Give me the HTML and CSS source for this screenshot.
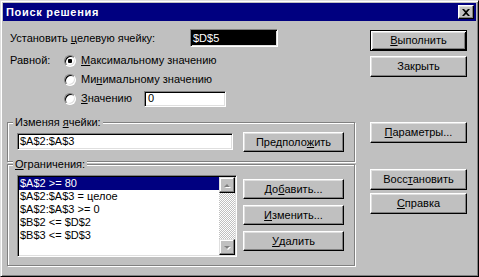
FILE: index.html
```html
<!DOCTYPE html>
<html>
<head>
	<meta charset="utf-8">
	<title>Поиск решения</title>
	<link rel="stylesheet" href="styles.css">
</head>
<body>
<div class="window">
	<div class="titlebar">
		<span class="title">Поиск решения</span>
		<span class="close">
			<svg width="8" height="7" viewBox="0 0 8 7"><path d="M0 0h2l2 2 2-2h2L5 3.5 8 7H6L4 5 2 7H0l3-3.5z" fill="#000"/></svg>
		</span>
	</div>
	<div class="content">
		<div class="main">
			<div class="target">
				<span class="target-label">Установить <u>ц</u>елевую ячейку:</span>
				<span class="field field-dark">$D$5</span>
			</div>
			<div class="equal">
				<span class="equal-label">Равной:</span>
				<div class="radios">
					<div class="radio-row"><span class="radio checked"></span><span><u>М</u>аксимальному значению</span></div>
					<div class="radio-row"><span class="radio"></span><span>Ми<u>н</u>имальному значению</span></div>
					<div class="radio-row"><span class="radio"></span><span class="value-label"><u>З</u>начению</span><span class="field field-value">0</span></div>
				</div>
			</div>
			<div class="group">
				<span class="group-title">Изменяя <u>я</u>чейки:</span>
				<div class="group-row">
					<span class="field field-cells">$A$2:$A$3</span>
					<span class="btn btn-small">Предполо<u>ж</u>ить</span>
				</div>
			</div>
			<div class="group limits">
				<span class="group-title"><u>О</u>граничения:</span>
				<div class="group-row">
					<div class="listbox">
						<div class="items">
							<div class="item selected">$A$2 &gt;= 80</div>
							<div class="item">$A$2:$A$3 = целое</div>
							<div class="item">$A$2:$A$3 &gt;= 0</div>
							<div class="item">$B$2 &lt;= $D$2</div>
							<div class="item">$B$3 &lt;= $D$3</div>
						</div>
						<div class="scrollbar">
							<span class="scroll-btn"><span class="arrow-up"></span></span>
							<span class="track"></span>
							<span class="scroll-btn"><span class="arrow-down"></span></span>
						</div>
					</div>
					<div class="group-buttons">
						<span class="btn btn-small">До<u>б</u>авить...</span>
						<span class="btn btn-small"><u>И</u>зменить...</span>
						<span class="btn btn-small"><u>У</u>далить</span>
					</div>
				</div>
			</div>
		</div>
		<div class="side">
			<span class="btn btn-default run"><u>В</u>ыполнить</span>
			<span class="btn close-btn">Закрыть</span>
			<span class="btn params"><u>П</u>араметры...</span>
			<span class="btn restore">Восс<u>т</u>ановить</span>
			<span class="btn help"><u>С</u>правка</span>
		</div>
	</div>
</div>
</body>
</html>
```

FILE: styles.css
```css
* {
	margin: 0;
	padding: 0;
}
body {
	font-family: "Liberation Sans", Arial, sans-serif;
	font-size: 11px;
	line-height: 13px;
	color: #000;
	background: #c0c0c0;
}
u {
	text-decoration: underline;
	text-underline-offset: 1px;
}
.window {
	width: 479px;
	height: 277px;
	box-sizing: border-box;
	background: #c0c0c0;
	border: 1px solid;
	border-color: #dfdfdf #000 #000 #dfdfdf;
	box-shadow: inset 1px 1px #fff, inset -1px -1px #808080;
	padding: 2px;
}
.titlebar {
	height: 18px;
	background: #000080;
	color: #fff;
	display: flex;
	align-items: center;
	justify-content: space-between;
	padding: 0 2px 0 3px;
}
.title {
	font-weight: bold;
	font-size: 11px;
	letter-spacing: 0.7px;
}
.close {
	width: 16px;
	height: 14px;
	box-sizing: border-box;
	background: #c0c0c0;
	border: 1px solid;
	border-color: #fff #000 #000 #fff;
	box-shadow: inset -1px -1px #808080, inset 1px 1px #dfdfdf;
	display: flex;
	align-items: center;
	justify-content: center;
}
.content {
	display: flex;
	padding-left: 4px;
}
.main {
	width: 348px;
	display: flex;
	flex-direction: column;
}
.target {
	display: flex;
	align-items: center;
	height: 18px;
	margin-top: 8px;
}
.target-label {
	width: 180px;
	padding-left: 3px;
}
.field {
	box-sizing: border-box;
	display: flex;
	align-items: center;
	border: 1px solid;
	border-color: #808080 #fff #fff #808080;
	box-shadow: inset 1px 1px #000, inset -1px -1px #dfdfdf;
	background: #fff;
	padding: 0 2px;
}
.field-dark {
	width: 88px;
	height: 18px;
	background: #000;
	color: #fff;
}
.equal {
	display: flex;
	margin-top: 4px;
}
.equal-label {
	width: 54px;
	padding-left: 3px;
	line-height: 19px;
}
.radio-row {
	display: flex;
	align-items: center;
	height: 19px;
}
.radio {
	width: 12px;
	height: 12px;
	box-sizing: border-box;
	border-radius: 50%;
	border: 1px solid;
	border-color: #808080 #fff #fff #808080;
	box-shadow: inset 1px 1px #000, inset -1px -1px #dfdfdf;
	background: #fff;
	margin-right: 5px;
}
.radio.checked {
	background: radial-gradient(circle, #000 0 2px, #fff 2.5px);
}
.value-label {
	width: 63px;
}
.field-value {
	width: 82px;
	height: 16px;
	padding-left: 3px;
}
.group {
	display: flex;
	flex-direction: column;
	margin-top: 14px;
	border: 1px solid #808080;
	box-shadow: inset 1px 1px #fff, 1px 1px #fff;
	padding: 0 10px 9px 9px;
}
.group-title {
	align-self: flex-start;
	margin: -7px 0 0 -4px;
	padding: 0 2px;
	background: #c0c0c0;
}
.group-row {
	display: flex;
	align-items: flex-start;
	margin-top: 3px;
}
.field-cells {
	width: 216px;
	height: 17px;
	margin-top: 1px;
}
.btn {
	box-sizing: border-box;
	height: 21px;
	display: flex;
	align-items: center;
	justify-content: center;
	background: #c0c0c0;
	border: 1px solid;
	border-color: #fff #000 #000 #fff;
	box-shadow: inset -1px -1px #808080, inset 1px 1px #dfdfdf;
}
.btn-small {
	width: 101px;
	height: 20px;
	margin-left: 10px;
}
.limits {
	margin-top: 2px;
	padding-bottom: 8px;
}
.limits .group-row {
	margin-top: 4px;
}
.listbox {
	width: 220px;
	height: 82px;
	box-sizing: border-box;
	display: flex;
	border: 1px solid;
	border-color: #808080 #fff #fff #808080;
	box-shadow: inset 1px 1px #000, inset -1px -1px #dfdfdf;
	background: #fff;
	padding: 1px;
}
.items {
	flex: 1;
}
.item {
	height: 13px;
	padding-left: 1px;
	white-space: nowrap;
}
.item.selected {
	background: #000080;
	color: #fff;
}
.scrollbar {
	width: 16px;
	display: flex;
	flex-direction: column;
}
.scroll-btn {
	width: 16px;
	height: 16px;
	box-sizing: border-box;
	display: flex;
	align-items: center;
	justify-content: center;
	background: #c0c0c0;
	border: 1px solid;
	border-color: #dfdfdf #000 #000 #dfdfdf;
	box-shadow: inset -1px -1px #808080, inset 1px 1px #fff;
}
.arrow-up, .arrow-down {
	width: 0;
	height: 0;
	border-left: 3px solid transparent;
	border-right: 3px solid transparent;
	filter: drop-shadow(1px 1px 0 #fff);
}
.arrow-up {
	border-bottom: 3px solid #808080;
}
.arrow-down {
	border-top: 3px solid #808080;
}
.track {
	flex: 1;
	background: repeating-conic-gradient(#c0c0c0 0 25%, #fff 0 50%) 0 0 / 2px 2px;
}
.group-buttons {
	display: flex;
	flex-direction: column;
	margin-top: 4px;
	gap: 6px;
}
.group-buttons .btn-small {
	margin-left: 6px;
}
.side {
	width: 97px;
	margin-left: 15px;
	display: flex;
	flex-direction: column;
}
.btn-default {
	border: 1px solid #000;
	box-shadow: inset 1px 1px #fff, inset -1px -1px #000, inset 2px 2px #dfdfdf, inset -2px -2px #808080;
}
.run {
	margin-top: 9px;
}
.close-btn {
	margin-top: 5px;
}
.params {
	margin-top: 45px;
}
.restore {
	margin-top: 26px;
}
.help {
	margin-top: 3px;
}
```
